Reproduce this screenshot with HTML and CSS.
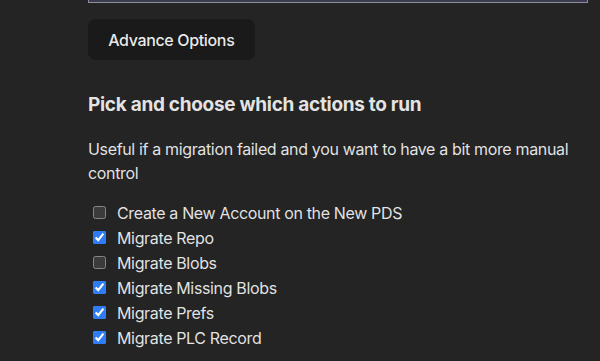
FILE: index.html
```html
<!DOCTYPE html>
<html>

<head>
    <title>Migration</title>
    <link rel="stylesheet" href="styles.css">
</head>

<body>
    <div class="container">
        <input class="handle" type="text" />

        <button class="advance">Advance Options</button>

        <h3>Pick and choose which actions to run</h3>
        <p class="note">Useful if a migration failed and you want to have a bit more manual control</p>

        <ul class="steps">
            <li><label><input type="checkbox" /> Create a New Account on the New PDS</label></li>
            <li><label><input type="checkbox" checked /> Migrate Repo</label></li>
            <li><label><input type="checkbox" /> Migrate Blobs</label></li>
            <li><label><input type="checkbox" checked /> Migrate Missing Blobs</label></li>
            <li><label><input type="checkbox" checked /> Migrate Prefs</label></li>
            <li><label><input type="checkbox" checked /> Migrate PLC Record</label></li>
        </ul>
    </div>
</body>

</html>
```

FILE: styles.css
```css
:root {
    color-scheme: dark;
}

body {
    margin: 0;
    background-color: #242424;
    color: rgba(255, 255, 255, 0.88);
    font-family: Inter, "Noto Sans", sans-serif;
    font-size: 16px;
    line-height: 1.5;
    letter-spacing: -0.35px;
}

.container {
    width: 500px;
    margin-left: 88px;
}

.handle {
    display: block;
    box-sizing: border-box;
    width: 500px;
    height: 40px;
    margin: -37px 0 0 0;
    background: #3b3b4f;
    border: 1px solid #8d8d9b;
}

.advance {
    display: block;
    margin-top: 16px;
    padding: 0.6em 1.2em;
    border: 1px solid transparent;
    border-radius: 8px;
    background-color: #1a1a1a;
    color: rgba(255, 255, 255, 0.92);
    font-family: inherit;
    font-size: 1em;
    font-weight: 500;
    letter-spacing: -0.35px;
    cursor: pointer;
}

h3 {
    margin: 31px 0 0 0;
    font-size: 19px;
    font-weight: 700;
    line-height: 28px;
    letter-spacing: -0.3px;
}

.note {
    margin: 18px 0 0 0;
    line-height: 24px;
}

.steps {
    list-style-type: none;
    margin: 15px 0 0 0;
    padding: 0;
}

.steps>li {
    height: 25px;
}

.steps label {
    display: flex;
    align-items: center;
    gap: 5px;
    height: 25px;
}

.steps input {
    width: 13px;
    height: 13px;
    margin: 0 6px 0 5px;
    accent-color: #2f7df6;
}
```
